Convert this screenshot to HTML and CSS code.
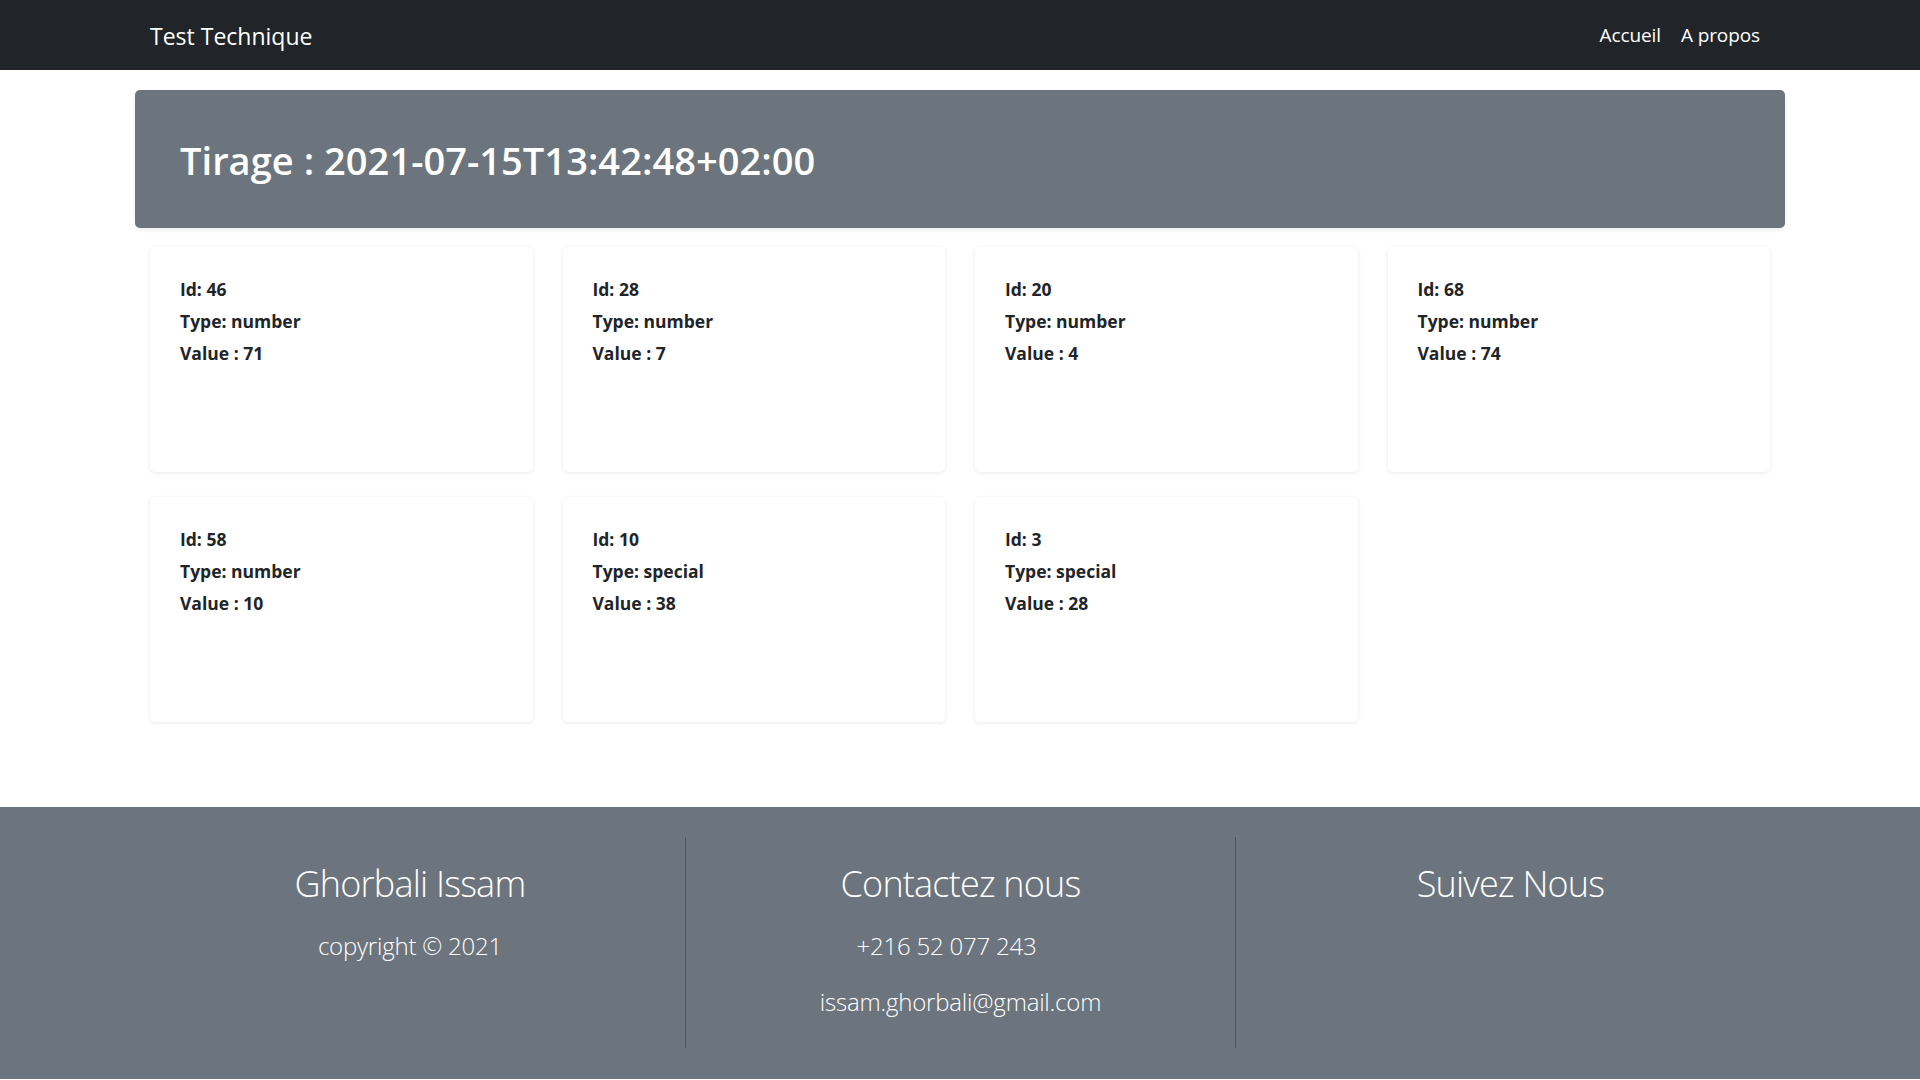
FILE: index.html
```html
<!DOCTYPE html>
<html lang="fr">
<head>
<meta charset="utf-8">
<title>Test Technique</title>
<link rel="stylesheet" href="styles.css">
</head>
<body>
<nav class="navbar">
  <div class="nav-inner">
    <a class="brand" href="#">Test Technique</a>
    <ul class="nav-links">
      <li><a href="#">Accueil</a></li>
      <li><a href="#">A propos</a></li>
    </ul>
  </div>
</nav>
<main class="container">
  <div class="jumbo">
    <h1 class="jumbo-title">Tirage : 2021-07-15T13:42:48+02:00</h1>
  </div>
  <div class="cards">
    <div class="card"><p>Id: 46</p><p>Type: number</p><p>Value : 71</p></div>
    <div class="card"><p>Id: 28</p><p>Type: number</p><p>Value : 7</p></div>
    <div class="card"><p>Id: 20</p><p>Type: number</p><p>Value : 4</p></div>
    <div class="card"><p>Id: 68</p><p>Type: number</p><p>Value : 74</p></div>
    <div class="card"><p>Id: 58</p><p>Type: number</p><p>Value : 10</p></div>
    <div class="card"><p>Id: 10</p><p>Type: special</p><p>Value : 38</p></div>
    <div class="card"><p>Id: 3</p><p>Type: special</p><p>Value : 28</p></div>
  </div>
</main>
<footer class="footer">
  <div class="footer-inner">
    <div class="fcol">
      <h2 class="fhead">Ghorbali Issam</h2>
      <p class="ftext">copyright © 2021</p>
    </div>
    <div class="fcol">
      <h2 class="fhead">Contactez nous</h2>
      <p class="ftext phone">+216 52 077 243</p>
      <p class="ftext">issam.ghorbali@gmail.com</p>
    </div>
    <div class="fcol">
      <h2 class="fhead">Suivez Nous</h2>
    </div>
  </div>
</footer>
</body>
</html>
```
FILE: styles.css
```css
* { box-sizing: border-box; }
html, body { margin: 0; padding: 0; }
body {
  font-family: "Open Sans", "Noto Sans", sans-serif;
  color: #212529;
  background: #fff;
}
.navbar {
  background: #212529;
  height: 70px;
}
.nav-inner {
  width: 1650px;
  margin: 0 auto;
  padding: 0 15px;
  height: 100%;
  display: flex;
  align-items: center;
  justify-content: space-between;
}
.brand {
  color: #fff;
  text-decoration: none;
  font-size: 23px;
  margin-top: 2px;
}
.nav-links {
  list-style: none;
  margin: 0;
  padding: 0;
  display: flex;
}
.nav-links a {
  display: block;
  color: #fff;
  text-decoration: none;
  font-size: 19px;
  padding: 8px 10px;
  letter-spacing: -0.1px;
}
.container {
  width: 1650px;
  margin: 0 auto;
}
.jumbo {
  margin-top: 20px;
  background: #6c757d;
  border-radius: 5px;
  height: 138px;
  padding: 0 45px;
  display: flex;
  align-items: center;
  box-shadow: 0 2px 4px rgba(0,0,0,0.08);
}
.jumbo-title {
  margin: 2px 0 0;
  color: #fff;
  font-size: 38px;
  font-weight: 600;
  letter-spacing: 0.05px;
}
.cards {
  margin-top: 19px;
  padding: 0 15px;
  display: grid;
  grid-template-columns: repeat(4, 1fr);
  column-gap: 30px;
  row-gap: 25px;
}
.card {
  height: 225px;
  background: #fff;
  border-radius: 5px;
  box-shadow: 0 1px 4px rgba(0,0,0,0.09);
  padding: 29px 30px;
}
.card p {
  margin: 0 0 6px;
  font-size: 17.5px;
  line-height: 26px;
  font-weight: 700;
  letter-spacing: 0;
}
.footer {
  margin-top: 85px;
  background: #6c757d;
  padding: 30px 0 31px;
}
.footer-inner {
  width: 1650px;
  margin: 0 auto;
  display: grid;
  grid-template-columns: repeat(3, 1fr);
}
.fcol {
  height: 211px;
  text-align: center;
  color: #fff;
  padding-top: 23px;
}
.fcol + .fcol {
  border-left: 1px solid #4f565d;
}
.fhead {
  margin: 0 0 21px;
  font-size: 36px;
  font-weight: 300;
  line-height: 48px;
  letter-spacing: -0.8px;
}
.ftext {
  margin: 0 0 22px;
  font-size: 24px;
  font-weight: 300;
  line-height: 34px;
  letter-spacing: -0.2px;
}
.phone { padding-right: 28px; }
```
